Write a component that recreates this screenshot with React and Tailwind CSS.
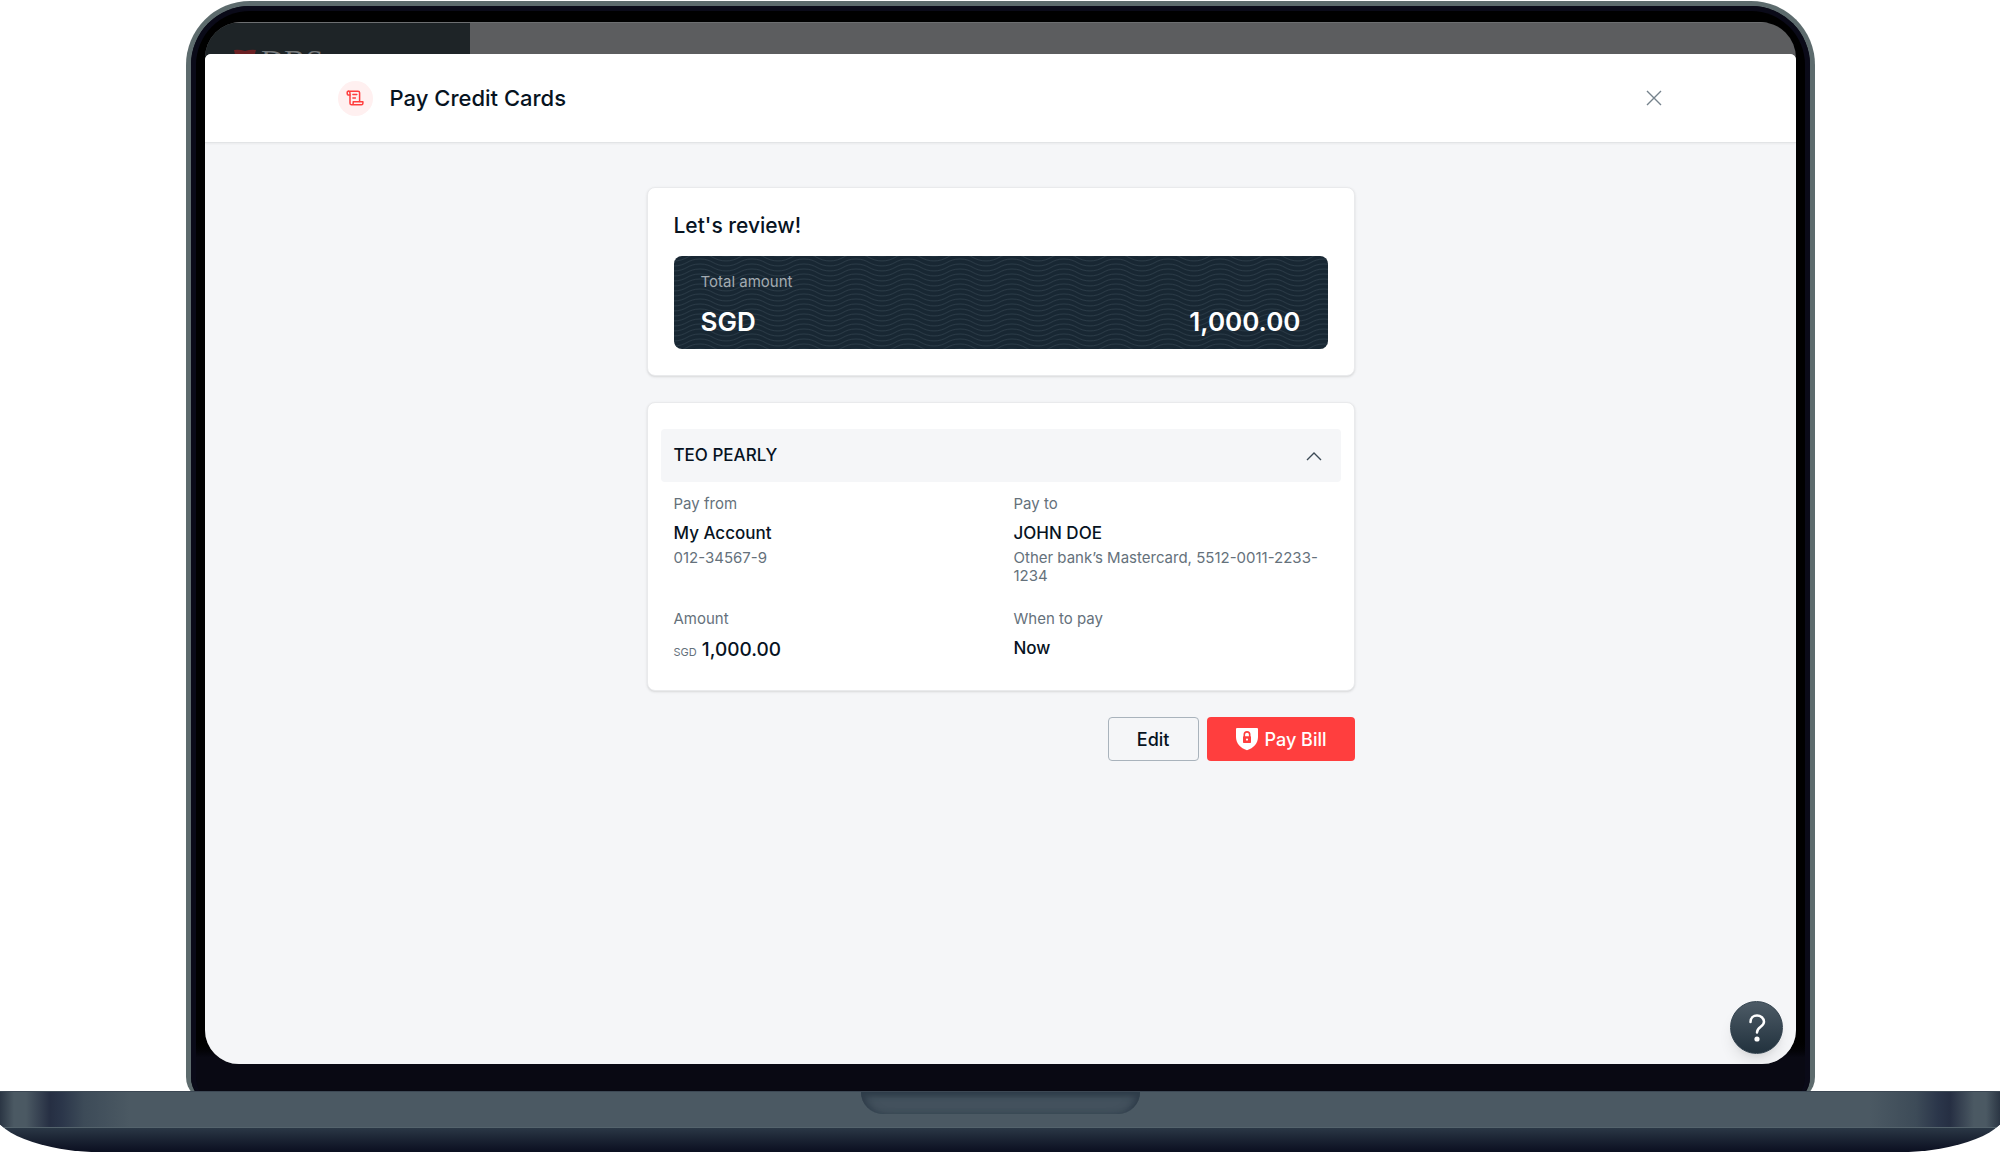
import { useState } from "react";

const payee = {
  name: "TEO PEARLY",
  from: { name: "My Account", number: "012-34567-9" },
  to: { name: "JOHN DOE", number: "Other bank’s Mastercard, 5512-0011-2233-1234" },
  currency: "SGD",
  amount: "1,000.00",
  when: "Now",
};

function BillIcon() {
  return (
    <svg viewBox="0 0 18 18" className="size-[18px]" fill="none" stroke="#ff3e3e" strokeWidth="1.5" strokeLinecap="round" strokeLinejoin="round" aria-hidden="true">
      <path d="M4 6H2.2Q1.2 6 1.2 4.5V3.2Q1.2 2.2 2.2 2.2H12Q13.6 2.2 13.6 3.8V12.5" />
      <path d="M2.4 2.2Q4 2.4 4 4V14.2Q4 15.8 5.6 15.8H15.4Q16.9 15.8 16.9 14.2V12.7H7.2V14.2Q7.2 15.8 5.6 15.8" />
      <path d="M6.9 5.6H10.8M6.9 9H9.4" />
    </svg>
  );
}

function ShieldIcon() {
  return (
    <svg viewBox="0 0 24 24" className="size-6" aria-hidden="true">
      <path d="M1.5 1H22Q23 1 23 2V10C23 16.500 18.500 21 12 23.300C5.500 21 1 16.500 1 10V2Q1 1 2 1Z" fill="#fff" />
      <path d="M9.300 10V7.600a2.700 2.700 0 0 1 5.400 0V10" fill="none" stroke="#ff3e3e" strokeWidth="1.600" />
      <rect x="8" y="9.300" width="8" height="6.700" rx="0.800" fill="#ff3e3e" />
      <circle cx="12" cy="12.600" r="1.100" fill="#fff" />
    </svg>
  );
}

function Waves() {
  return (
    <svg className="absolute inset-0 size-full" aria-hidden="true">
      <defs>
        <pattern id="waves" width="52" height="5" patternUnits="userSpaceOnUse">
          {[-10, -5, 0, 5, 10].map((y) => (
            <path key={y} d={`M-1 ${y + 5}C13 ${y + 5} 13 ${y - 2} 26 ${y - 2}S39 ${y + 5} 53 ${y + 5}`} fill="none" stroke="#2b3b47" strokeWidth="1" />
          ))}
        </pattern>
      </defs>
      <rect width="100%" height="100%" fill="url(#waves)" />
    </svg>
  );
}

function Field({ label, children }) {
  return (
    <div className="px-[13px]">
      <dt className="text-[15px] leading-5 text-[#65717b]">{label}</dt>
      {children}
    </div>
  );
}

function Review() {
  const [open, setOpen] = useState(true);

  return (
    <main className="mx-auto w-full max-w-[708px] pt-11">
      <section className="rounded-lg border border-[#e9eaec] bg-white px-[26px] pt-6 pb-[26px] shadow-sm">
        <h2 className="text-[21px] leading-7 font-medium text-[#07131f]">Let's review!</h2>
        <div className="relative mt-4 overflow-hidden rounded-lg bg-[#182733] px-[27px] pt-4 pb-[9px]">
          <Waves />
          <div className="relative">
            <p className="text-[15px] leading-5 text-[#a3abb1]">Total amount</p>
            <p className="mt-3 flex justify-between text-[26px] leading-9 font-semibold text-white">
              <span>{payee.currency}</span>
              <span>{payee.amount}</span>
            </p>
          </div>
        </div>
      </section>

      <section className="mt-[26px] rounded-lg border border-[#e9eaec] bg-white px-[13px] pt-[26px] pb-[26px] shadow-sm">
        <button
          onClick={() => setOpen(!open)}
          aria-expanded={open}
          className="flex h-[53px] w-full items-center justify-between rounded bg-[#f5f6f8] pr-[18px] pl-[13px] text-[17px] font-medium text-[#07131f]"
        >
          {payee.name}
          <svg viewBox="0 0 18 18" className="size-[18px]" fill="none" stroke="#3c4a56" strokeWidth="1.4" aria-hidden="true">
            <path d="M2 13L9 6L16 13" />
          </svg>
        </button>
        {open && (
          <dl className="mt-3 grid grid-cols-2 gap-y-6">
            <Field label="Pay from">
              <dd className="mt-[7px] text-[17px] leading-6 font-medium text-[#07131f]">{payee.from.name}</dd>
              <dd className="mt-1 text-[15px] leading-[18px] text-[#65717b]">{payee.from.number}</dd>
            </Field>
            <Field label="Pay to">
              <dd className="mt-[7px] text-[17px] leading-6 font-medium text-[#07131f]">{payee.to.name}</dd>
              <dd className="mt-1 text-[15px] leading-[18px] text-[#65717b]">{payee.to.number}</dd>
            </Field>
            <Field label="Amount">
              <dd className="mt-[9px] text-[19px] leading-6 font-medium text-[#07131f]">
                <span className="text-[11px] font-normal text-[#65717b]">{payee.currency}</span> {payee.amount}
              </dd>
            </Field>
            <Field label="When to pay">
              <dd className="mt-[7px] text-[17px] leading-6 font-medium text-[#07131f]">{payee.when}</dd>
            </Field>
          </dl>
        )}
      </section>

      <div className="mt-[26px] flex justify-end gap-2">
        <button className="h-11 rounded border border-[#a9b3bc] px-7 text-[18px] font-medium text-[#07131f]">Edit</button>
        <button className="flex h-11 items-center gap-[6px] rounded bg-[#ff3e3e] px-7 text-[18px] font-medium text-white">
          <ShieldIcon />
          Pay Bill
        </button>
      </div>
    </main>
  );
}

function Screen() {
  return (
    <div className="relative flex flex-1 flex-col overflow-hidden rounded-t-[36px] rounded-b-[34px] bg-[#5c5d5f]">
      <div className="flex h-16 border-t border-[#6d6f71]">
        <div className="flex w-1/6 items-start gap-1 bg-[#1e2427] pt-[26px] pl-7">
          <svg viewBox="0 0 24 24" className="size-6" aria-hidden="true">
            <path d="M1 1Q6 0 12 2Q18 0 23 1Q21 7 22 12Q21 17 23 23Q12 21 1 23Q3 17 2 12Q3 7 1 1Z" fill="#6b2023" />
          </svg>
          <span className="font-['Liberation_Serif'] text-[32px] leading-6 text-[#767a7c]">DBS</span>
        </div>
      </div>
      <div className="relative -mt-8 flex flex-1 flex-col overflow-hidden rounded-t-md bg-[#f5f6f8]">
        <header className="border-b border-[#e2e4e6] bg-white shadow-xs">
          <div className="mx-auto flex h-[88px] w-10/12 items-center">
            <span className="flex size-[35px] items-center justify-center rounded-full bg-[#fff0f0]">
              <BillIcon />
            </span>
            <h1 className="ml-[17px] text-[22px] font-medium text-[#07131f]">Pay Credit Cards</h1>
            <button aria-label="Close" className="ml-auto">
              <svg viewBox="0 0 18 18" className="size-[18px]" stroke="#75828c" strokeWidth="1.4" aria-hidden="true">
                <path d="M2 2L16 16M16 2L2 16" />
              </svg>
            </button>
          </div>
        </header>
        <Review />
      </div>
      <button
        aria-label="Help"
        className="absolute right-[13px] bottom-[10px] flex size-[53px] items-center justify-center rounded-full border border-[#33434f] bg-linear-to-b from-[#4d5b66] to-[#22323e] shadow-lg"
      >
        <svg viewBox="0 0 20 30" className="h-[30px] w-5" aria-hidden="true">
          <path d="M3.500 9C3.500 4.500 6.500 2.500 10 2.500S17 5 17 8.800C17 14 10 13.500 10 19.500" fill="none" stroke="#fff" strokeWidth="2.500" strokeLinecap="round" />
          <circle cx="10" cy="26" r="2.600" fill="#fff" />
        </svg>
      </button>
    </div>
  );
}

export default function App() {
  return (
    <div className="flex min-h-screen flex-col bg-white pt-px font-[Inter,sans-serif]">
      <div className="flex flex-1 flex-col pr-[9.25%] pl-[9.3%]">
        <div className="-mb-[10px] flex flex-1 flex-col rounded-t-[64px] rounded-b-[24px] border-[5px] border-b-0 border-[#5d6b6d] bg-[#050511]">
          <div className="flex flex-1 flex-col rounded-t-[59px] rounded-b-[24px] border-x-[5px] border-t-[5px] border-[#0a0a18] bg-linear-to-b from-black from-94% to-[#090913] to-96% px-[9px] pt-[11px] pb-[37px]">
            <Screen />
          </div>
        </div>
      </div>
      <div className="relative h-[61px] overflow-hidden">
        <div className="-mx-2 h-full overflow-hidden rounded-b-[110px_44px] bg-linear-to-b from-[#2b3846] from-60% to-[#0b0f20]">
          <div className="mx-2 h-[37px] border-y border-t-[#3c4854] border-b-[#54636c] bg-[linear-gradient(90deg,#2b3644_0,#4b5963_14px,#4b5963_26px,#262f43_50px,#2b364a_62px,#3d4b58_84px,#4b5963_130px,#4b5963_calc(100%_-_130px),#3d4b58_calc(100%_-_84px),#2b364a_calc(100%_-_62px),#262f43_calc(100%_-_50px),#4b5963_calc(100%_-_26px),#4b5963_calc(100%_-_14px),#2b3644_100%)]">
            <div className="mx-auto h-[22px] w-[279px] rounded-b-[24px] bg-[#43515d] shadow-[inset_0_4px_5px_#2f3d4a,inset_8px_0_8px_-4px_#2f3d4a,inset_-8px_0_8px_-4px_#2f3d4a]" />
          </div>
        </div>
      </div>
    </div>
  );
}
